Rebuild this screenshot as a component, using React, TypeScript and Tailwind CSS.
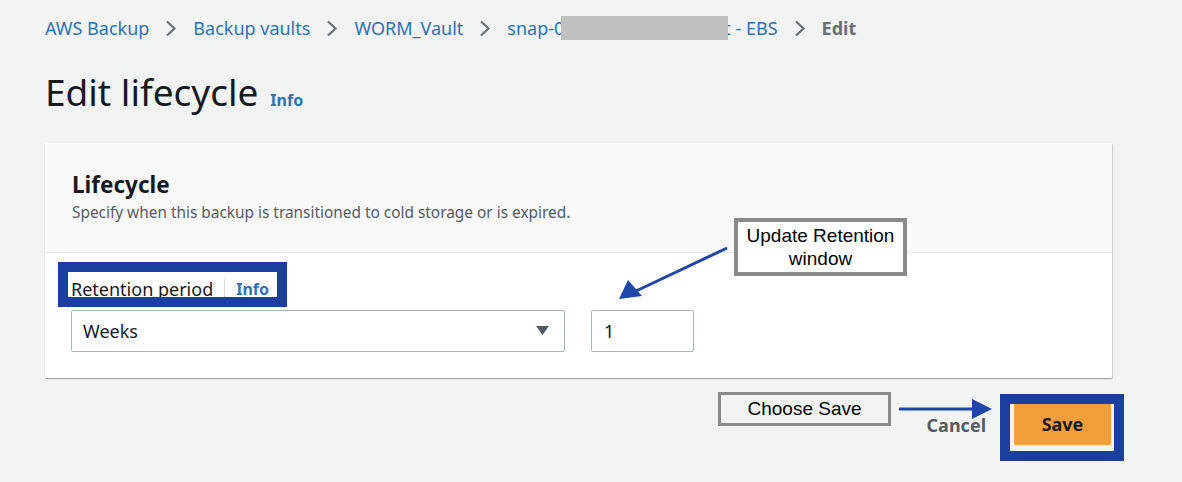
const ui = { fontFamily: '"Noto Sans", "Open Sans", sans-serif' };
const note = { fontFamily: '"Liberation Sans", Arial, sans-serif' };

function Chevron() {
  return (
    <svg width="12" height="17" viewBox="0 0 12 17" className="shrink-0">
      <path d="M2 1.5 L9.5 8.5 L2 15.5" fill="none" stroke="#687078" strokeWidth="2.2" />
    </svg>
  );
}

function Crumbs() {
  return (
    <nav className="flex h-[24px] items-center gap-[16px] text-[18px] text-[#2e72b4]">
      <span>AWS Backup</span>
      <Chevron />
      <span>Backup vaults</span>
      <Chevron />
      <span>WORM_Vault</span>
      <Chevron />
      <span className="flex items-center whitespace-nowrap">
        snap-0
        <span className="relative z-10 -ml-[3px] -mr-[4px] inline-block h-[24px] w-[167px] bg-[#c0c0c0]" />
        t - EBS
      </span>
      <Chevron />
      <span className="font-bold text-[#687078]">Edit</span>
    </nav>
  );
}

export default function App() {
  return (
    <div className="relative min-h-[482px] w-[1182px] bg-[#f2f3f3] pl-[45px] pt-[16px] text-[#16191f]" style={ui}>
      <Crumbs />

      <div className="mt-[30px] flex items-baseline gap-[12px]">
        <h1 className="text-[37px] leading-[44px] font-normal">Edit lifecycle</h1>
        <span className="text-[16px] font-bold text-[#2e72b4]">Info</span>
      </div>

      <section className="mt-[29px] w-[1067px] rounded-[1px] bg-white shadow-[0_1px_1px_rgba(0,28,36,0.3),1px_1px_1px_rgba(0,28,36,0.15)]">
        <div className="border-b border-[#eaeded] bg-[#fafafa] px-[27px] pt-[27px] pb-[29px]">
          <h2 className="text-[22.5px] leading-[30px] font-bold">Lifecycle</h2>
          <p className="mt-[3px] text-[15.4px] leading-[20px] text-[#545b64]">
            Specify when this backup is transitioned to cold storage or is expired.
          </p>
        </div>
        <div className="px-[26px] pt-[20px] pb-[26px]">
          <div className="flex h-[32px] items-center text-[18px]">
            <span>Retention period</span>
            <span className="mx-[11px] h-[20px] w-px bg-[#d5dbdb]" />
            <span className="text-[16px] font-bold text-[#2e72b4]">Info</span>
          </div>
          <div className="mt-[5px] flex gap-[26px]">
            <div className="flex h-[42px] w-[494px] items-center justify-between rounded-[2px] border border-[#aab7b8] pl-[11px] pr-[15px] text-[18px]">
              <span>Weeks</span>
              <svg width="13" height="10" viewBox="0 0 13 10">
                <path d="M0 0 H13 L6.5 9 Z" fill="#545b64" />
              </svg>
            </div>
            <div className="flex h-[42px] w-[103px] items-center rounded-[2px] border border-[#aab7b8] pl-[12px] text-[18px]">
              1
            </div>
          </div>
        </div>
      </section>

      <div className="mt-[25px] flex w-[1066px] items-center justify-end gap-[28px]">
        <span className="mt-[3px] text-[18px] font-bold text-[#545b64]">Cancel</span>
        <button className="h-[42px] w-[97px] rounded-[2px] bg-[#f29e3a] text-[18px] font-bold text-[#16191f]">
          Save
        </button>
      </div>

      {/* annotations laid over the screenshot */}
      <div className="pointer-events-none absolute left-[58px] top-[262px] h-[45px] w-[229px] border-[10px] border-[#1a3f9f]" />
      <div className="pointer-events-none absolute left-[1000px] top-[394px] h-[67px] w-[124px] border-[10px] border-[#1a3f9f]" />

      <div
        className="absolute left-[734px] top-[218px] flex h-[58px] w-[173px] flex-col items-center justify-center border-[4px] border-[#8a8a8a] bg-white text-[19px] leading-[23px] text-black"
        style={note}
      >
        <span>Update Retention</span>
        <span>window</span>
      </div>
      <div
        className="absolute left-[718px] top-[392px] flex h-[34px] w-[173px] items-center justify-center border-[3px] border-[#8a8a8a] bg-[#f2f3f3] text-[19px] text-black"
        style={note}
      >
        Choose Save
      </div>

      <svg className="pointer-events-none absolute left-0 top-0" width="1182" height="482">
        <line x1="727" y1="248" x2="634" y2="292" stroke="#1d47a8" strokeWidth="3" />
        <path d="M619 299 L628 280 L642 296 Z" fill="#1d47a8" />
        <line x1="899" y1="409" x2="974" y2="409" stroke="#1d47a8" strokeWidth="3" />
        <path d="M992 409 L972 399 L972 419 Z" fill="#1d47a8" />
      </svg>
    </div>
  );
}
